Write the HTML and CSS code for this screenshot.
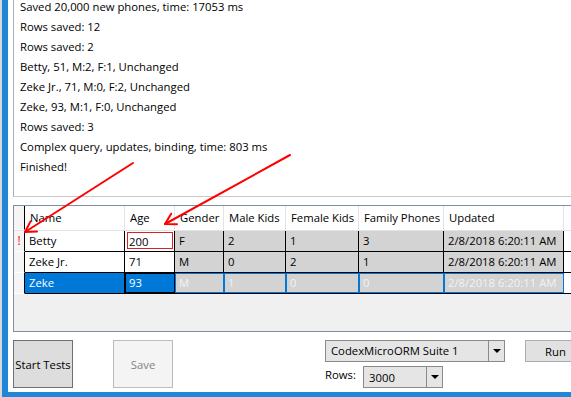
FILE: index.html
```html
<!DOCTYPE html>
<html>
<head>
<meta charset="utf-8">
<link rel="stylesheet" href="styles.css">
</head>
<body>
<div class="screen">
  <div class="desk"></div>
  <div class="window">
    <div class="log">
      <div class="lines">
        <div class="line">Saved 20,000 new phones, time: 17053 ms</div>
        <div class="line">Rows saved: 12</div>
        <div class="line">Rows saved: 2</div>
        <div class="line">Betty, 51, M:2, F:1, Unchanged</div>
        <div class="line">Zeke Jr., 71, M:0, F:2, Unchanged</div>
        <div class="line">Zeke, 93, M:1, F:0, Unchanged</div>
        <div class="line">Rows saved: 3</div>
        <div class="line">Complex query, updates, binding, time: 803 ms</div>
        <div class="line">Finished!</div>
      </div>
    </div>

    <div class="grid">
      <div class="grow head">
        <div class="c rh corner"></div>
        <div class="c hc">Name</div>
        <div class="c hc">Age</div>
        <div class="c hc">Gender</div>
        <div class="c hc">Male Kids</div>
        <div class="c hc">Female Kids</div>
        <div class="c hc">Family Phones</div>
        <div class="c hc">Updated</div>
        <div class="c hc fill"></div>
      </div>
      <div class="grow data">
        <div class="c rh"><span class="err">!</span></div>
        <div class="c dc">Betty</div>
        <div class="c dc invalid"><span class="box">200</span></div>
        <div class="c dc ro">F</div>
        <div class="c dc ro">2</div>
        <div class="c dc ro">1</div>
        <div class="c dc ro">3</div>
        <div class="c dc ro">2/8/2018 6:20:11 AM</div>
        <div class="c dc fill"></div>
      </div>
      <div class="grow data">
        <div class="c rh"></div>
        <div class="c dc">Zeke Jr.</div>
        <div class="c dc">71</div>
        <div class="c dc ro">M</div>
        <div class="c dc ro">0</div>
        <div class="c dc ro">2</div>
        <div class="c dc ro">1</div>
        <div class="c dc ro">2/8/2018 6:20:11 AM</div>
        <div class="c dc fill"></div>
      </div>
      <div class="grow data sel">
        <div class="c rh"></div>
        <div class="c dc selc">Zeke</div>
        <div class="c dc selc focus">93</div>
        <div class="c dc ro selro">M</div>
        <div class="c dc ro selro">1</div>
        <div class="c dc ro selro">0</div>
        <div class="c dc ro selro">0</div>
        <div class="c dc ro selro">2/8/2018 6:20:11 AM</div>
        <div class="c dc fill"></div>
      </div>
    </div>

    <div class="controls">
      <div class="btn start">Start Tests</div>
      <div class="btn save">Save</div>
      <div class="right">
        <div class="rowa">
          <div class="combo suite"><span class="ctext">CodexMicroORM Suite 1</span><span class="drop"><span class="tri"></span></span></div>
          <div class="btn run">Run</div>
        </div>
        <div class="rowb">
          <span class="lbl">Rows:</span>
          <div class="combo rows"><span class="ctext low">3000</span><span class="drop"><span class="tri"></span></span></div>
        </div>
      </div>
    </div>
  </div>
</div>
<svg class="arrows" width="571" height="397" viewBox="0 0 571 397">
  <g fill="none" stroke="#ff0000" stroke-width="2" stroke-linecap="round" stroke-linejoin="round">
    <path d="M133 163 L25 232"/>
    <path d="M37 231.5 L25 232 L30.5 221.4"/>
    <path d="M290 155 L165 224"/>
    <path d="M177 224.2 L165 224 L171.2 213.7"/>
  </g>
</svg>
</body>
</html>
```

FILE: styles.css
```css
html, body {
  margin: 0;
  padding: 0;
}
body {
  width: 571px;
  height: 397px;
  overflow: hidden;
  position: relative;
  background: #ffffff;
  font-family: "Open Sans", "Noto Sans", sans-serif;
  font-size: 11.3px;
  color: #000;
}
.screen {
  display: flex;
  width: 571px;
  height: 397px;
}
.desk {
  width: 2px;
  background: #d8d8d8;
  flex: none;
}
.window {
  flex: 1;
  min-width: 0;
  height: 392px;
  border-left: 6px solid #1f86d8;
  border-bottom: 5px solid #1f86d8;
  background: #fff;
  padding-left: 5px;
  overflow: hidden;
  display: flex;
  flex-direction: column;
}
.log {
  width: 600px;
  height: 196px;
  flex: none;
  border-left: 1px solid #abadb3;
  border-bottom: 1px solid #c8c8c8;
  overflow: hidden;
}
.lines {
  margin-top: -3px;
  padding-left: 6px;
}
.line {
  height: 20px;
  line-height: 20px;
  white-space: nowrap;
}
.grid {
  margin-top: 8px;
  width: 600px;
  height: 125px;
  flex: none;
  border: 1px solid #7f8fa3;
  border-right: none;
  background: #f0f0f0;
}
.grow {
  display: grid;
  grid-template-columns: 11px 100px 50px 49px 62px 73px 85px 120px 1fr;
}
.c {
  box-sizing: border-box;
  white-space: nowrap;
  overflow: hidden;
}
.head {
  height: 24px;
  background: #fff;
  border-bottom: 1px solid #e3e3e3;
}
.hc {
  border-right: 1px solid #e0e4e8;
  padding-left: 5px;
  line-height: 23px;
}
.hc.fill {
  border-right: none;
}
.corner {
  background: #f0f0f0;
  border-right: 1px solid #e0e0e0;
}
.data {
  height: 20px;
  border-bottom: 1px solid #000;
}
.rh {
  background: #f5f5f5;
  border-bottom: 1px solid #fff;
  border-right: 1px solid #000;
  text-align: center;
}
.data .rh {
  margin-bottom: -1px;
}
.err {
  color: #ff0000;
  font-size: 12px;
  line-height: 19px;
}
.dc {
  border-right: 1px solid #000;
  padding-left: 4px;
  line-height: 19px;
  background: #fff;
}
.dc.fill {
  border-right: none;
}
.ro {
  background: #d3d3d3;
}
.invalid {
  padding: 1px 1px 1px 2px;
}
.box {
  display: block;
  height: 17px;
  line-height: 17px;
  border: 1px solid #e02020;
  box-sizing: border-box;
  padding-left: 1px;
}
.selc {
  background: #0078d7;
  color: #fff;
}
.focus {
  border: 1px solid #000;
  padding-left: 3px;
  line-height: 17px;
}
.selro {
  border: 1px solid #0078d7;
  padding-left: 3px;
  line-height: 17px;
  color: #f2f2f2;
}
.controls {
  margin-top: 8px;
  display: flex;
  align-items: flex-start;
}
.btn {
  box-sizing: border-box;
  display: flex;
  flex: none;
  align-items: center;
  justify-content: center;
  background: #e1e1e1;
  border: 1px solid #adadad;
  white-space: nowrap;
}
.start {
  width: 60px;
  height: 48px;
  background: #dddddd;
  border-color: #707070;
}
.save {
  width: 60px;
  height: 48px;
  margin-left: 40px;
  background: #f4f4f4;
  border-color: #bcbcbc;
  color: #838383;
}
.right {
  flex: none;
  margin-left: 152px;
  display: flex;
  flex-direction: column;
  gap: 4px;
}
.rowa {
  display: flex;
  gap: 20px;
}
.rowb {
  display: flex;
  align-items: center;
}
.lbl {
  flex: none;
  width: 38px;
  margin-top: -5px;
}
.combo {
  box-sizing: border-box;
  flex: none;
  height: 22px;
  display: flex;
  background: #e5e5e5;
  border: 1px solid #8a8a8a;
}
.suite {
  width: 180px;
}
.rows {
  width: 80px;
}
.ctext {
  flex: 1;
  padding-left: 5px;
  line-height: 20px;
  white-space: nowrap;
}
.ctext.low {
  line-height: 22px;
}
.drop {
  width: 15px;
  flex: none;
  border-left: 1px solid #8a8a8a;
  display: flex;
  align-items: center;
  justify-content: center;
}
.tri {
  width: 0;
  height: 0;
  border-left: 4px solid transparent;
  border-right: 4px solid transparent;
  border-top: 4px solid #000;
}
.run {
  width: 60px;
  height: 22px;
  justify-content: flex-start;
  padding-left: 19px;
}
.arrows {
  position: absolute;
  left: 0;
  top: 0;
  pointer-events: none;
}
```
